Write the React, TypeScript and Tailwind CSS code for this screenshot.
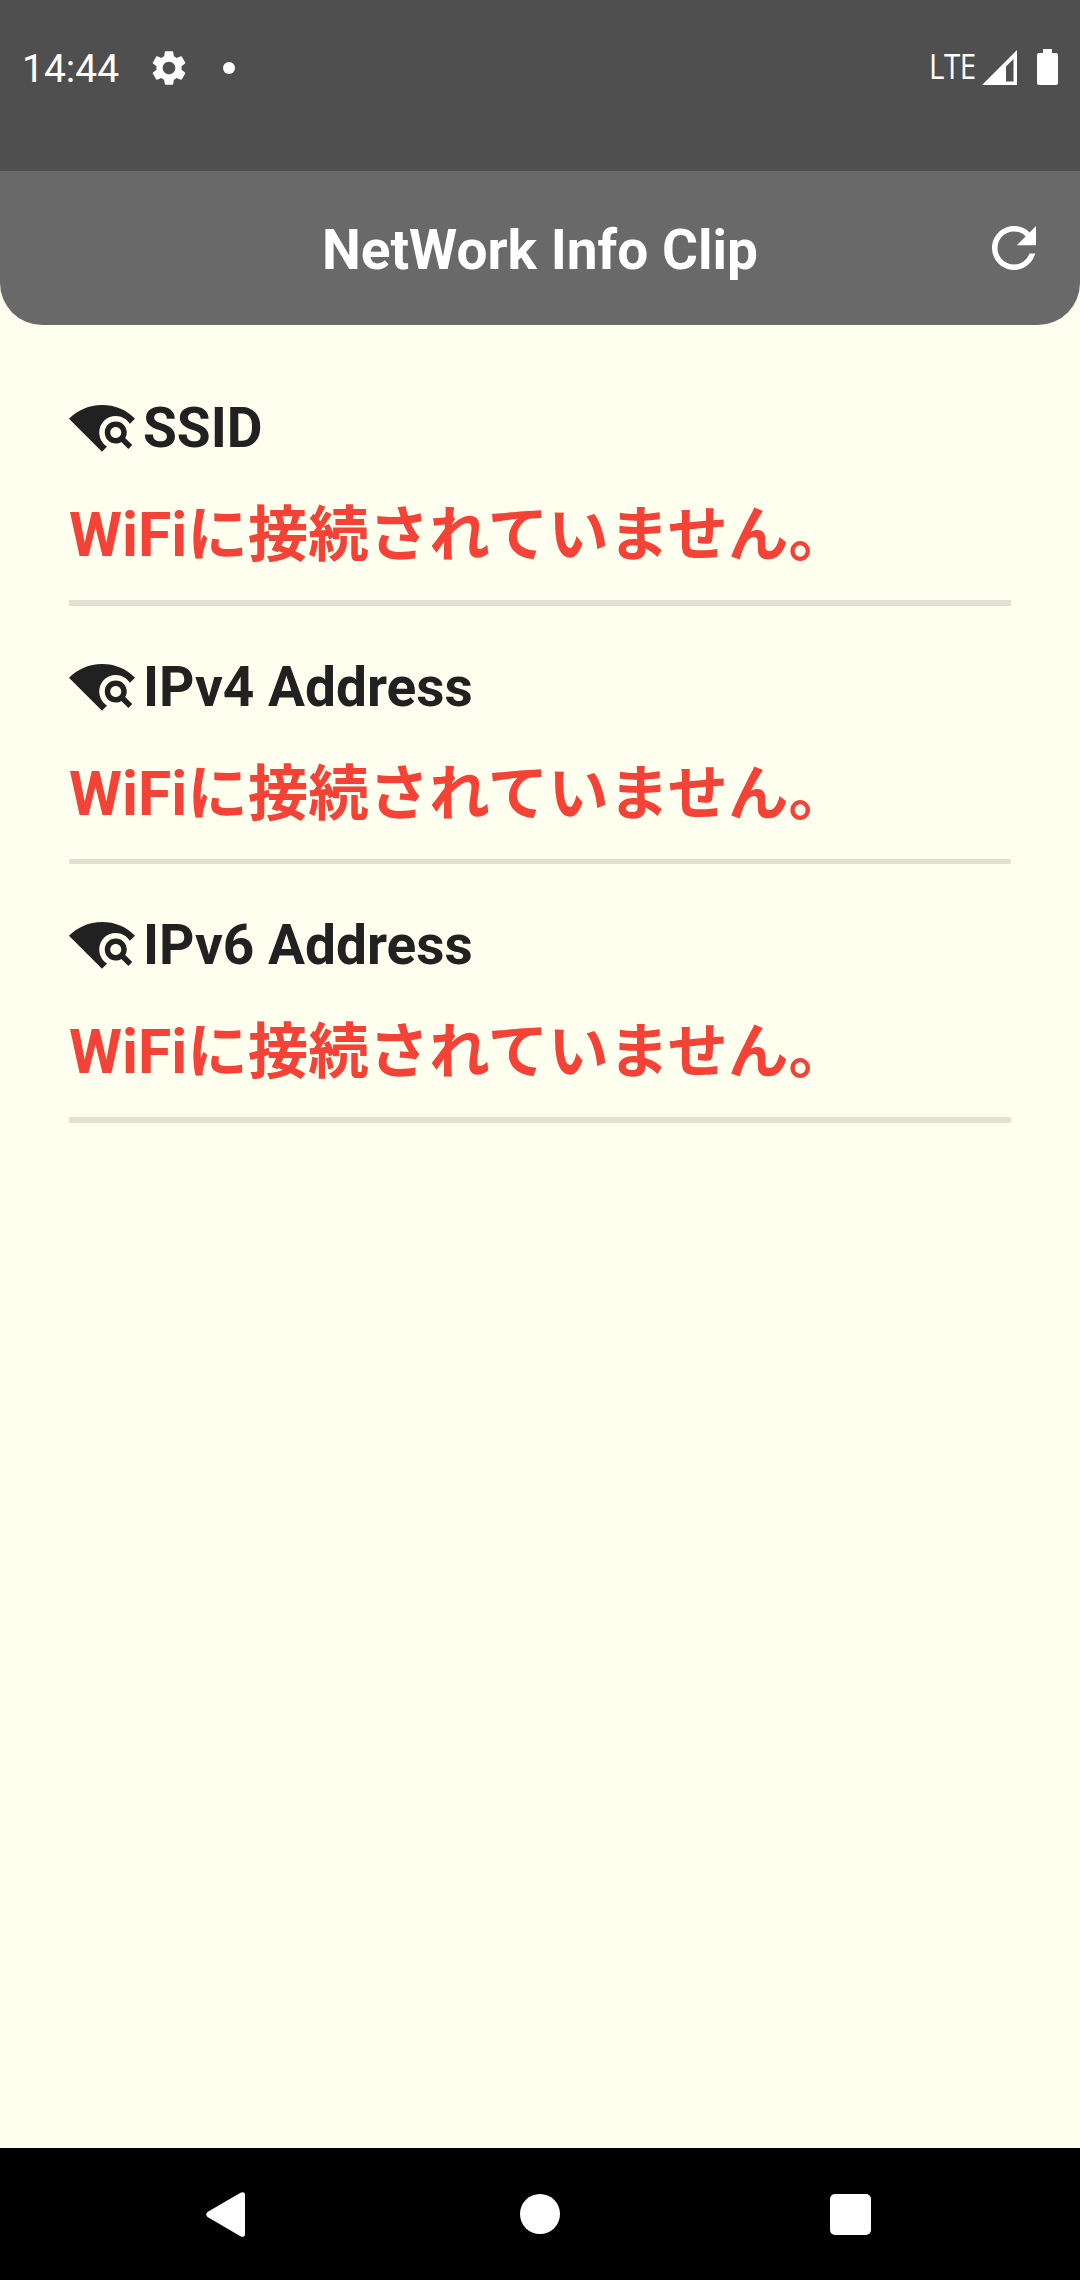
import { MdRefresh, MdSettings, MdWifiFind } from "react-icons/md";

const sections = ["SSID", "IPv4 Address", "IPv6 Address"];
const message = "WiFiに接続されていません。";

function StatusBar() {
  return (
    <div className="flex h-[171px] shrink-0 items-start justify-between bg-[#4f4f4f] pt-[45px] pr-[22px] pl-[22px] text-white">
      <div className="flex h-[45px] items-center">
        <span className="w-[98px] pt-1 text-[39px] leading-[45px]">14:44</span>
        <MdSettings className="ml-[28px] size-[42px]" />
        <span className="ml-[33px] size-3 rounded-full bg-white" />
      </div>
      <div className="flex h-[45px] items-center">
        <span className="origin-right scale-x-[0.87] pb-0.5 font-['Open_Sans',sans-serif] text-[34px] leading-[45px] tracking-[-0.5px]">
          LTE
        </span>
        <svg className="ml-[6px] h-[35px] w-[35px]" viewBox="0 0 35 35" fill="white">
          <path fillRule="evenodd" d="M35 0V35H0ZM31.5 9L24 16.5V31.5H31.5Z" />
        </svg>
        <svg className="mb-px ml-5 h-[36px] w-[21px]" viewBox="0 0 21 36" fill="white">
          <path d="M6 0H15V4H19Q21 4 21 6V34Q21 36 19 36H2Q0 36 0 34V6Q0 4 2 4H6Z" />
        </svg>
      </div>
    </div>
  );
}

function AppBar() {
  return (
    <header className="grid h-[154px] shrink-0 grid-cols-[1fr_auto_1fr] items-center rounded-b-[42px] bg-[#696969] text-white">
      <h1 className="col-start-2 pt-1 text-[55px] leading-[64px] font-bold">NetWork Info Clip</h1>
      <button className="mr-[33px] justify-self-end" aria-label="Refresh">
        <MdRefresh className="size-[66px]" />
      </button>
    </header>
  );
}

function Section({ title }: { title: string }) {
  return (
    <section className="h-[258.5px] shrink-0">
      <div className="flex h-[66px] items-center gap-2">
        <MdWifiFind className="size-[66px]" />
        <h2 className="pt-[2.5px] text-[55px] leading-[66px] font-bold">{title}</h2>
      </div>
      <p className="mt-8 h-[88px] font-[Roboto,'Noto_Sans_CJK_JP',sans-serif] text-[60.5px] leading-[88px] font-bold whitespace-nowrap text-[#f44336]">
        {message}
      </p>
      <div className="mt-5 h-[5.5px] bg-[#e0e0d3]" />
    </section>
  );
}

function NavigationBar() {
  return (
    <nav className="flex h-[132px] shrink-0 items-center bg-black pl-[206px]">
      <svg className="mt-px h-[45px] w-[39px]" viewBox="0 0 39 45" fill="white">
        <path d="M1.5 20L34.5 .7Q39 -1 39 3V42Q39 46 34.5 44.3L1.5 25Q-1 22.5 1.5 20Z" />
      </svg>
      <span className="ml-[275px] size-10 rounded-full bg-white" />
      <span className="mt-px ml-[270px] size-[41px] rounded-[5px] bg-white" />
    </nav>
  );
}

export default function App() {
  return (
    <div className="flex h-[2280px] w-[1080px] flex-col overflow-hidden bg-[#fffff0] font-[Roboto,sans-serif] text-[#212121]">
      <StatusBar />
      <AppBar />
      <main className="flex flex-1 flex-col px-[69px] pt-[69px]">
        {sections.map((title) => (
          <Section key={title} title={title} />
        ))}
      </main>
      <NavigationBar />
    </div>
  );
}
